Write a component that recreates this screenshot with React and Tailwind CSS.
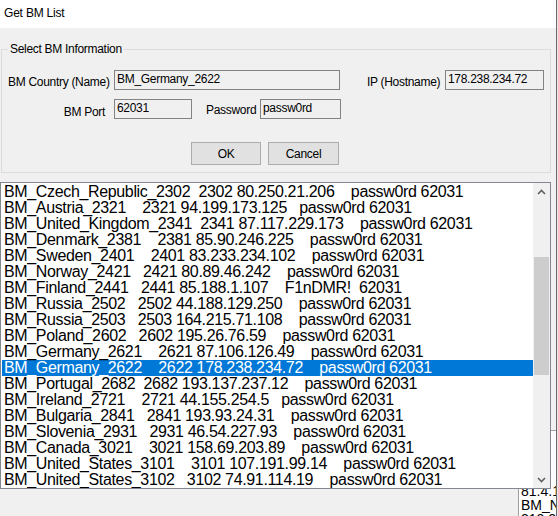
import React from "react";

const rows = [
    "BM_Czech_Republic_2302  2302 80.250.21.206    passw0rd 62031",
    "BM_Austria_2321    2321 94.199.173.125   passw0rd 62031",
    "BM_United_Kingdom_2341  2341 87.117.229.173    passw0rd 62031",
    "BM_Denmark_2381    2381 85.90.246.225    passw0rd 62031",
    "BM_Sweden_2401    2401 83.233.234.102    passw0rd 62031",
    "BM_Norway_2421   2421 80.89.46.242    passw0rd 62031",
    "BM_Finland_2441   2441 85.188.1.107    F1nDMR!  62031",
    "BM_Russia_2502   2502 44.188.129.250    passw0rd 62031",
    "BM_Russia_2503   2503 164.215.71.108    passw0rd 62031",
    "BM_Poland_2602   2602 195.26.76.59    passw0rd 62031",
    "BM_Germany_2621    2621 87.106.126.49    passw0rd 62031",
    "BM_Germany_2622    2622 178.238.234.72    passw0rd 62031",
    "BM_Portugal_2682  2682 193.137.237.12    passw0rd 62031",
    "BM_Ireland_2721    2721 44.155.254.5   passw0rd 62031",
    "BM_Bulgaria_2841   2841 193.93.24.31    passw0rd 62031",
    "BM_Slovenia_2931   2931 46.54.227.93    passw0rd 62031",
    "BM_Canada_3021    3021 158.69.203.89    passw0rd 62031",
    "BM_United_States_3101    3101 107.191.99.14    passw0rd 62031",
    "BM_United_States_3102   3102 74.91.114.19    passw0rd 62031",
];

const SELECTED = 11;

function TextBox({ value, width }) {
    return (
        <div className={`${width} h-[20px] bg-[#f0f0f0] border border-[#838383] pl-[2px] flex items-center text-[12px] leading-[14px] text-black`}>
            <span className="-mt-[3px]">{value}</span>
        </div>
    );
}

function Chevron({ down }) {
    return (
        <svg width="9" height="6" viewBox="0 0 9 6" className="block">
            <path
                d={down ? "M1 1 L4.5 4.5 L8 1" : "M1 5 L4.5 1.5 L8 5"}
                fill="none"
                stroke="#606060"
                strokeWidth="1.6"
            />
        </svg>
    );
}

export default function App() {
    return (
        <div
            className="w-[558px] h-[516px] relative overflow-hidden flex bg-[#f0f0f0] text-black"
            style={{ fontFamily: '"Liberation Sans", Arial, sans-serif' }}
        >
            {/* window behind, peeking out bottom right */}
            <div className="absolute left-[518px] top-[430px] w-[38px] h-[86px] bg-white border-l border-t border-[#a0a0a0] overflow-hidden text-[14px] leading-[14px] whitespace-pre pl-[2px] pt-[11px]">
                <div>u</div>
                <div>2(</div>
                <div>re</div>
                <div>81.4.10</div>
                <div>BM_Ne</div>
                <div>313.22</div>
            </div>

            {/* dialog */}
            <div className="w-[556px] h-full flex flex-col">
                {/* title bar */}
                <div className="h-[28px] bg-white flex items-center pl-[4px] text-[12px] tracking-[-0.2px]">
                    <span className="-mt-[2px]">Get BM List</span>
                </div>

                <div className="flex-1 flex flex-col text-[12px] tracking-[-0.3px]">
                    {/* group box */}
                    <fieldset className="mt-[14px] ml-[1px] w-[550px] border border-[#dcdcdc] pb-[7px]">
                        <legend className="ml-[6px] px-[2px] leading-[14px]">Select BM Information</legend>

                        <div className="mt-[14px] h-[20px] flex items-center">
                            <div className="w-[112px] pl-[6px] pt-[4px]">BM Country (Name)</div>
                            <TextBox value="BM_Germany_2622" width="w-[226px]" />
                            <div className="ml-[27px] w-[78px] pt-[4px]">IP (Hostname)</div>
                            <TextBox value="178.238.234.72" width="w-[99px]" />
                        </div>

                        <div className="mt-[9px] h-[20px] flex items-center">
                            <div className="w-[112px] pr-[9px] text-right pt-[6px]">BM Port</div>
                            <TextBox value="62031" width="w-[78px]" />
                            <div className="ml-[14px] w-[54px] pt-[2px]">Password</div>
                            <TextBox value="passw0rd" width="w-[81px]" />
                        </div>

                        <div className="mt-[23px] flex">
                            <button className="ml-[189px] w-[70px] h-[23px] bg-[#e1e1e1] border border-[#adadad] leading-[14px]">
                                OK
                            </button>
                            <button className="ml-[7px] w-[71px] h-[23px] bg-[#e1e1e1] border border-[#adadad] leading-[14px]">
                                Cancel
                            </button>
                        </div>
                    </fieldset>

                    {/* list box */}
                    <div className="relative z-10 mt-[9px] w-[551px] h-[307px] bg-white border border-[#828790] flex">
                        <div className="w-[532px] pl-[1px] pt-[1px] overflow-hidden">
                            {rows.map((row, i) => (
                                <div
                                    key={i}
                                    className={`w-[531px] h-[16px] pl-[2px] whitespace-pre text-[16px] leading-[16px] tracking-[-0.35px] ${
                                        i === SELECTED ? "bg-[#0078d7] text-white" : "text-black"
                                    }`}
                                >
                                    {row}
                                </div>
                            ))}
                        </div>
                        <div className="w-[17px] bg-[#f0f0f0] flex flex-col items-center">
                            <div className="h-[17px] flex items-center justify-center">
                                <Chevron />
                            </div>
                            <div className="mt-[57px] w-[15px] h-[118px] bg-[#cdcdcd]" />
                            <div className="flex-1" />
                            <div className="h-[17px] flex items-center justify-center">
                                <Chevron down />
                            </div>
                        </div>
                    </div>
                </div>
            </div>

            {/* edge of the window behind */}
            <div className="w-[1px] h-full bg-[#6a6a6a]" />
            <div className="w-[1px] h-full bg-[#e8e8e8]" />
        </div>
    );
}
